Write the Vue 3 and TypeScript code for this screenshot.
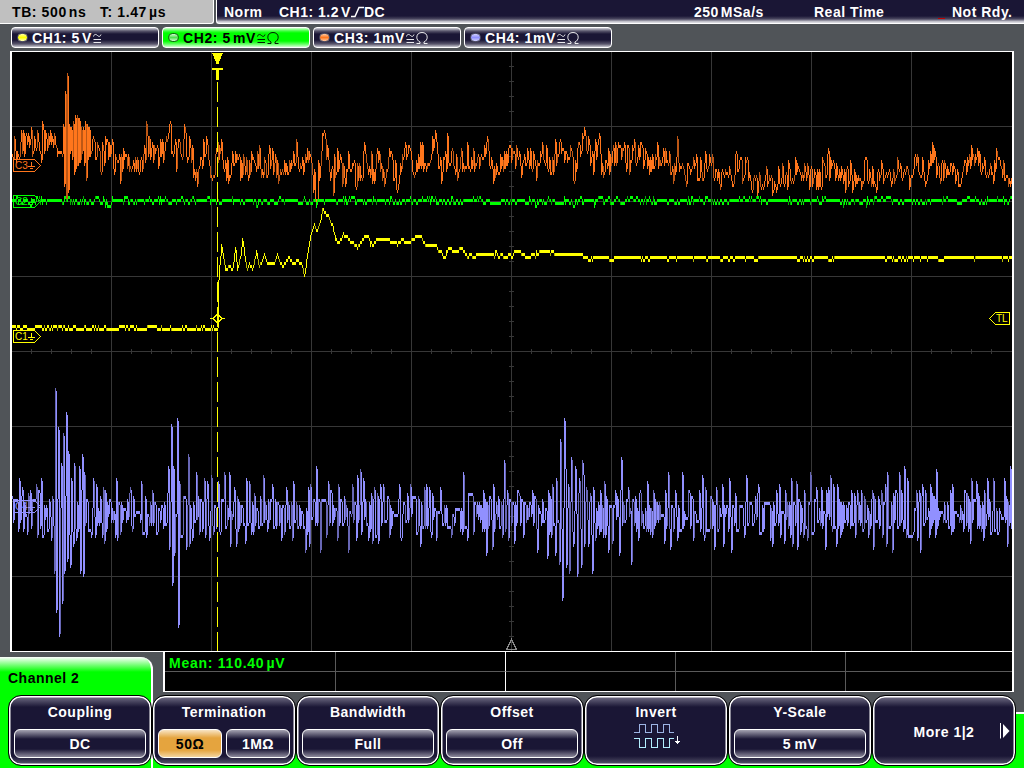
<template>
  <div class="scope">
    <header class="status">
      <div class="timebase">
        <span class="tb">TB: 500<i class="thin"></i>ns</span>
        <span>T: 1.47<i class="thin"></i>µs</span>
      </div>
      <div class="trigger">
        <span class="mode">Norm</span>
        <span class="source">CH1: 1.2<i class="thin"></i>V</span>
        <svg class="edge" width="13" height="12" viewBox="0 0 13 12">
          <path d="M0 10.5H4L8 1.5H13" />
        </svg>
        <span class="dc">DC</span>
        <span class="rate">250<i class="thin"></i>MSa/s</span>
        <span class="realtime">Real Time</span>
        <i class="led"></i>
        <span class="ready">Not Rdy.</span>
      </div>
    </header>

    <nav class="channels">
      <div v-for="ch in channels" :key="ch.name" class="chip" :class="{ active: ch.active }">
        <i class="lamp" :class="ch.lamp"></i>
        <span class="chip-text">{{ ch.name }}: {{ ch.value }}<i class="thin" v-if="ch.gap"></i>{{ ch.unit }}</span>
        <svg class="coupling" width="9" height="10" viewBox="0 0 9 10">
          <path d="M0.5 3.5C1 1 3 1 4.5 2.5S7.5 3.5 8 1.5M0.5 6.5H8M0.5 9.5H8" />
        </svg>
        <svg v-if="ch.ohm" class="coupling" width="12" height="12" viewBox="0 0 12 12">
          <path d="M0.5 11.5H4V10C2 9 0.8 7.5 0.8 5.2C0.8 2.3 3 0.5 6 0.5S11.2 2.3 11.2 5.2C11.2 7.5 10 9 8 10V11.5H11.5" />
        </svg>
      </div>
    </nav>

    <div class="plot">
      <svg width="1000" height="599" viewBox="12 52 1000 599" shape-rendering="crispEdges">
        <g class="grid">
          <path :d="gridPath" />
        </g>
        <g class="traces">
          <path class="c4" :d="ch4.bright" />
          <path class="c4 dim" :d="ch4.dim" />
          <path class="c3" :d="ch3.bright" />
          <path class="c3 dim" :d="ch3.dim" />
          <path class="c2" :d="ch2.bright" />
          <path class="c2 dim" :d="ch2.dim" />
          <path class="c1" :d="ch1.bright" />
          <path class="c1 dim" :d="ch1.dim" />
        </g>
        <path class="trigger-line" d="M217.5 82V651" />
        <path class="trigger-top" d="M212 53H223L219 62V64H216V62ZM212 68H223V70H219V80H216V70H212Z" />
        <path class="level" d="M210 318.5H213L217.5 314L222 318.5L217.5 323L213 318.5M222 318.5H225" />
        <g v-for="m in markers" :key="m.name" :class="['marker', m.cls]" :transform="`translate(13 ${m.y})`">
          <path d="M0.5 0.5H21.5L27.5 6.5L21.5 12.5H0.5Z" />
          <text x="2" y="10">{{ m.name }}</text>
          <path d="M18.5 3V7M15 7.5H22M17 9.5H20" />
        </g>
        <g class="marker c1" transform="translate(989 312)">
          <path d="M20.5 0.5H6.5L0.5 6.5L6.5 12.5H20.5Z" />
          <text x="7" y="10">TL</text>
        </g>
        <path class="origin" d="M506.5 649.5L511.5 639.5L516.5 649.5Z" />
      </svg>
    </div>

    <div class="measure-row">
      <div class="measure">
        <div class="mean">Mean: 110.40<i class="thin"></i>µV</div>
        <div v-for="n in 9" :key="n" class="slot"></div>
      </div>
    </div>

    <footer class="softkeys">
      <div class="tab">Channel 2</div>
      <div class="keys">
        <div v-for="key in keys" :key="key.label" class="key">
          <template v-if="key.more">
            <span class="more">{{ key.label }}</span>
            <svg class="next" width="10" height="16" viewBox="0 0 10 16">
              <path d="M0.5 0V15.5" stroke="#fff" />
              <path d="M3 1L9.5 8L3 15Z" fill="#fff" />
            </svg>
          </template>
          <template v-else>
            <span class="key-label">{{ key.label }}</span>
            <svg v-if="key.wave" class="wave" width="50" height="28" viewBox="0 0 50 28" shape-rendering="crispEdges">
              <path d="M0 9.5H5.5V1.5H11.5V9.5H17.5V1.5H23.5V9.5H29.5V1.5H35.5V9.5H40" stroke="#9db4e4" />
              <path d="M0 15.5H5.5V24.5H11.5V15.5H17.5V24.5H23.5V15.5H29.5V24.5H35.5V15.5H40" stroke="#b4efff" />
              <path d="M43.5 13V21M41 18.5H46M42 19.5H45" stroke="#fff" />
            </svg>
            <div v-else class="values">
              <span v-for="v in key.values" :key="v" class="value" :class="{ on: v === key.on }">{{ v }}</span>
            </div>
          </template>
        </div>
      </div>
    </footer>
  </div>
</template>

<script setup lang="ts">
type Point = [number, number]
type Band = [number, number, number]

interface Trace {
  bright: string
  dim: string
}

interface Key {
  label: string
  values?: string[]
  on?: string
  wave?: boolean
  more?: boolean
}

const X0 = 12
const X1 = 1011

const channels = [
  { name: 'CH1', value: '5', unit: 'V', gap: true, lamp: 'yellow', ohm: false, active: false },
  { name: 'CH2', value: '5', unit: 'mV', gap: true, lamp: 'green', ohm: true, active: true },
  { name: 'CH3', value: '1', unit: 'mV', gap: false, lamp: 'orange', ohm: true, active: false },
  { name: 'CH4', value: '1', unit: 'mV', gap: false, lamp: 'violet', ohm: true, active: false },
]

const markers = [
  { name: 'C3', cls: 'c3', y: 159 },
  { name: 'C2', cls: 'c2', y: 195 },
  { name: 'C1', cls: 'c1', y: 330 },
  { name: 'C4', cls: 'c4', y: 500 },
]

const keys: Key[] = [
  { label: 'Coupling', values: ['DC'] },
  { label: 'Termination', values: ['50Ω', '1MΩ'], on: '50Ω' },
  { label: 'Bandwidth', values: ['Full'] },
  { label: 'Offset', values: ['Off'] },
  { label: 'Invert', wave: true },
  { label: 'Y-Scale', values: ['5\u2009mV'] },
  { label: 'More 1|2', more: true },
]

// seeded generator, so the noise is the same on every load
function random(seed: number) {
  let s = seed
  return () => {
    s = (s * 1664525 + 1013904223) >>> 0
    return s / 4294967296
  }
}

function lerp(points: number[][], x: number, col: number) {
  if (x <= points[0][0]) return points[0][col]
  for (let i = 1; i < points.length; i++) {
    const a = points[i - 1]
    const b = points[i]
    if (x <= b[0]) return a[col] + ((b[col] - a[col]) * (x - a[0])) / (b[0] - a[0])
  }
  return points[points.length - 1][col]
}

// one vertical bar per pixel column, reaching back to the edge of the previous one
function columns(samples: number[], offset: number, rnd: () => number, dimRate: number): Trace {
  const out: Trace = { bright: '', dim: '' }
  const snap = (v: number) => Math.round((v - offset) / 3) * 3 + offset
  let prev = snap(samples[0])
  samples.forEach((v, i) => {
    const cur = snap(v)
    const top = cur > prev ? prev + 3 : cur
    const bottom = cur < prev ? prev : cur + 3
    const seg = `M${X0 + i + 0.5} ${top}V${bottom}`
    if (cur !== prev && rnd() < dimRate) out.dim += seg
    else out.bright += seg
    prev = cur
  })
  return out
}

function gridLines() {
  let d = ''
  for (let x = 111; x < X1; x += 100) d += `M${x + 0.5} 52V651`
  for (let y = 126; y < 640; y += 75) d += `M12 ${y + 0.5}H1012`
  for (let x = 31; x < X1; x += 20) d += `M${x + 0.5} 349V354`
  for (let y = 66; y < 650; y += 15) d += `M509 ${y + 0.5}H514`
  return d
}

const gridPath = gridLines()

const step: Point[] = [
  [217, 328], [218, 282], [219, 267], [221, 245], [223, 257], [225, 270], [229, 266], [232, 270], [235, 248],
  [237, 269], [240, 257], [242, 239], [245, 260], [247, 270], [249, 262], [252, 270], [256, 251], [259, 267],
  [264, 254], [267, 263], [274, 263], [277, 254], [282, 267], [288, 257], [293, 263], [297, 260], [301, 263],
  [304, 276], [307, 253], [310, 237], [314, 224], [317, 231], [320, 220], [322, 209], [325, 213], [328, 215],
  [332, 225], [335, 239], [338, 243], [343, 234], [347, 237], [350, 242], [358, 245], [364, 237], [368, 237],
  [372, 245], [376, 240], [388, 239], [392, 243], [400, 239], [408, 242], [416, 236], [421, 237], [425, 245],
  [436, 246], [439, 252], [445, 253], [448, 249], [462, 249], [467, 256], [473, 254], [485, 254], [497, 252],
  [500, 254], [505, 257], [514, 252], [520, 252], [527, 257], [533, 254], [538, 251], [553, 251], [557, 254],
  [582, 254], [584, 257], [1012, 257],
]

function buildCh1() {
  const rnd = random(11)
  const s: number[] = []
  let hold = 0
  for (let x = X0; x <= X1; x++) {
    if (x < 217) {
      if (rnd() < 0.65) hold = rnd() < 0.36 ? -3 : 0
      s.push(328 + hold)
    } else {
      if (rnd() < 0.65) hold = x > 335 && rnd() < 0.14 ? 3 : 0
      s.push(lerp(step, x, 1) + hold - 1)
    }
  }
  return columns(s, 256, rnd, 0.25)
}

function buildCh2() {
  const rnd = random(5)
  const s: number[] = []
  let hold = 0
  for (let x = X0; x <= X1; x++) {
    if (rnd() < 0.7) {
      const r = rnd()
      hold = r < 0.12 ? -3 : r < 0.4 ? 3 : r < 0.415 ? 6 : 0
    }
    s.push(199 + hold)
  }
  return columns(s, 199, rnd, 0.3)
}

// x, top and bottom of the noise band
const ch3Band: Band[] = [
  [12, 136, 162], [16, 152, 160], [20, 143, 155], [25, 138, 155], [30, 138, 148], [36, 133, 150], [42, 130, 157],
  [50, 133, 145], [55, 134, 150], [57, 143, 156], [60, 144, 156], [62, 145, 158], [63, 123, 160], [64, 91, 187],
  [65, 91, 187], [66, 73, 201], [67, 73, 201], [68, 103, 193], [69, 123, 168], [71, 128, 140], [73, 122, 177],
  [76, 112, 170], [79, 118, 165], [82, 130, 155], [84, 121, 167], [86, 121, 180], [88, 124, 160], [92, 135, 160],
  [97, 140, 162], [103, 145, 183], [107, 136, 160], [113, 148, 166], [117, 153, 178], [125, 152, 172],
  [130, 158, 170], [138, 158, 177], [143, 155, 172], [146, 136, 155], [150, 145, 158], [155, 150, 168],
  [160, 145, 160], [165, 138, 155], [170, 137, 152], [175, 145, 165], [180, 142, 158], [185, 133, 158],
  [190, 136, 165], [194, 150, 178], [196, 165, 195], [198, 165, 185], [203, 150, 165], [205, 133, 150],
  [208, 150, 165], [212, 165, 187], [215, 152, 175], [218, 141, 155], [221, 142, 155], [225, 165, 180],
  [228, 165, 183], [231, 150, 170], [235, 152, 165], [241, 157, 182], [247, 157, 178], [252, 160, 175],
  [257, 150, 167], [262, 170, 183], [267, 160, 175], [270, 156, 172], [276, 165, 180], [282, 157, 175],
  [288, 166, 173], [295, 146, 168], [300, 157, 168], [303, 168, 172], [307, 157, 163], [311, 154, 165],
  [313, 170, 193], [315, 185, 200], [316, 200, 213], [318, 172, 193], [321, 153, 158], [323, 130, 155],
  [325, 133, 155], [328, 149, 163], [331, 172, 192], [335, 157, 180], [340, 155, 167], [343, 163, 187],
  [348, 158, 170], [353, 163, 178], [358, 167, 187], [362, 155, 175], [365, 142, 157], [368, 163, 173],
  [372, 168, 187], [378, 145, 163], [382, 168, 183], [387, 160, 173], [390, 153, 170], [395, 162, 190],
  [397, 175, 196], [400, 163, 177], [404, 142, 152], [408, 147, 160], [413, 163, 177], [419, 154, 174],
  [424, 162, 174], [430, 146, 163], [434, 139, 152], [437, 150, 165], [441, 162, 183], [447, 143, 162],
  [452, 148, 170], [457, 163, 180], [463, 150, 168], [470, 153, 175], [477, 155, 170], [482, 153, 162],
  [486, 142, 157], [492, 165, 183], [496, 162, 176], [501, 163, 171], [505, 152, 170], [512, 149, 163],
  [517, 155, 162], [521, 165, 180], [527, 152, 163], [533, 160, 176], [539, 162, 178], [542, 147, 160],
  [548, 153, 174], [553, 152, 174], [557, 143, 157], [560, 139, 153], [564, 153, 163], [569, 150, 160],
  [572, 156, 170], [574, 165, 187], [578, 140, 162], [583, 133, 150], [587, 136, 153], [591, 155, 177],
  [595, 143, 156], [599, 148, 167], [603, 167, 177], [608, 153, 168], [613, 148, 172], [620, 145, 160],
  [625, 147, 163], [628, 142, 176], [635, 143, 160], [641, 145, 167], [647, 152, 168], [650, 154, 177],
  [657, 153, 168], [661, 157, 170], [666, 150, 165], [673, 162, 180], [677, 151, 168], [682, 158, 167],
  [686, 168, 190], [692, 157, 170], [699, 164, 183], [705, 165, 182], [708, 155, 175], [712, 167, 177],
  [720, 172, 186], [727, 171, 178], [732, 172, 186], [736, 157, 170], [742, 163, 183], [747, 157, 175],
  [750, 178, 195], [756, 180, 195], [763, 170, 188], [768, 169, 184], [771, 183, 198], [777, 177, 188],
  [781, 166, 177], [786, 173, 192], [792, 178, 183], [797, 163, 177], [801, 173, 182], [806, 163, 183],
  [809, 177, 193], [813, 168, 188], [820, 170, 188], [827, 158, 180], [833, 165, 182], [842, 172, 183],
  [850, 170, 188], [854, 167, 183], [857, 183, 200], [862, 173, 187], [864, 158, 180], [868, 173, 183],
  [874, 179, 193], [879, 166, 177], [887, 174, 187], [895, 168, 180], [903, 167, 175], [907, 165, 175],
  [908, 180, 196], [912, 162, 174], [917, 154, 163], [922, 168, 185], [926, 172, 187], [931, 148, 162],
  [934, 152, 168], [937, 163, 180], [942, 163, 183], [947, 167, 177], [952, 160, 177], [960, 169, 187],
  [963, 160, 170], [970, 155, 170], [977, 152, 170], [983, 165, 177], [989, 167, 174], [992, 172, 190],
  [995, 157, 167], [999, 157, 173], [1003, 172, 180], [1012, 178, 191],
]

function buildCh3() {
  const rnd = random(29)
  const s: number[] = []
  let up = false
  for (let x = X0; x <= X1; x++) {
    const burst = x > 62 && x < 90
    // mostly small excursions past the band, now and then a tall one
    const spread = burst ? 0 : rnd() ** 2 * 17
    const top = lerp(ch3Band, x, 1) - spread
    const bottom = lerp(ch3Band, x, 2) - 3 + spread * 0.6
    if (burst || rnd() < 0.55) up = !up
    const reach = burst ? 0 : rnd() * 0.35
    const span = bottom - top
    s.push(up ? top + span * reach : bottom - span * reach)
  }
  return columns(s, 199, rnd, 0.2)
}

const ch4Peaks: Point[] = [
  [12, 496], [18, 532], [19, 478], [22, 487], [27, 535], [30, 490], [36, 484], [37, 538], [41, 478], [51, 541],
  [54, 574], [55, 388], [56, 613], [58, 427], [59, 637], [61, 463], [62, 604], [63, 433], [64, 574], [66, 412],
  [67, 562], [68, 451], [70, 568], [71, 478], [73, 547], [74, 463], [76, 540], [79, 466], [80, 574], [82, 454],
  [83, 577], [84, 472], [91, 538], [93, 478], [95, 538], [96, 484], [102, 538], [103, 487], [104, 544],
  [105, 490], [116, 478], [117, 541], [130, 487], [132, 532], [141, 481], [152, 490], [157, 535], [168, 466],
  [169, 550], [171, 424], [172, 586], [173, 466], [174, 556], [177, 418], [178, 628], [179, 481], [186, 550],
  [188, 454], [189, 547], [192, 541], [196, 472], [199, 535], [204, 478], [207, 481], [209, 541], [211, 475],
  [213, 535], [218, 481], [220, 535], [224, 472], [229, 472], [230, 547], [234, 487], [236, 547], [245, 544],
  [246, 478], [249, 481], [251, 535], [263, 475], [267, 532], [272, 484], [281, 541], [286, 487], [292, 541],
  [293, 481], [305, 553], [308, 487], [309, 547], [310, 484], [316, 466], [320, 553], [326, 538], [328, 481],
  [337, 541], [338, 484], [348, 553], [352, 484], [356, 541], [357, 475], [360, 469], [361, 535], [363, 478],
  [368, 541], [372, 544], [374, 487], [378, 544], [380, 484], [383, 484], [389, 538], [399, 484], [401, 541],
  [410, 484], [420, 547], [424, 487], [426, 484], [427, 528], [429, 487], [431, 538], [436, 541], [440, 487],
  [451, 538], [463, 472], [467, 541], [473, 535], [483, 490], [486, 556], [492, 550], [493, 484], [502, 538],
  [504, 460], [507, 490], [508, 541], [514, 544], [519, 493], [532, 490], [537, 553], [547, 559], [548, 490],
  [551, 538], [552, 484], [555, 556], [556, 478], [559, 565], [560, 439], [562, 601], [564, 418], [565, 466],
  [566, 568], [568, 484], [569, 574], [571, 457], [573, 547], [575, 466], [577, 577], [579, 478], [581, 568],
  [582, 460], [583, 472], [584, 547], [586, 487], [588, 547], [590, 493], [592, 574], [593, 487], [595, 541],
  [600, 490], [603, 538], [604, 481], [608, 553], [612, 544], [615, 490], [619, 556], [621, 457], [628, 487],
  [631, 565], [640, 490], [647, 481], [650, 535], [652, 538], [653, 490], [664, 544], [665, 490], [668, 472],
  [670, 550], [675, 490], [677, 541], [682, 472], [693, 540], [699, 490], [702, 475], [704, 541], [705, 487],
  [714, 550], [716, 487], [722, 484], [723, 547], [729, 478], [731, 553], [735, 493], [744, 538], [746, 475],
  [758, 484], [763, 532], [772, 547], [776, 490], [779, 484], [784, 544], [785, 490], [790, 538], [791, 478],
  [792, 547], [796, 481], [797, 550], [803, 538], [804, 490], [807, 541], [810, 472], [816, 487], [821, 487],
  [825, 550], [830, 475], [832, 532], [833, 484], [836, 547], [837, 484], [851, 490], [855, 538], [857, 490],
  [861, 490], [868, 538], [872, 490], [873, 550], [881, 490], [885, 484], [886, 547], [887, 472], [892, 553],
  [893, 493], [899, 472], [903, 532], [904, 466], [906, 538], [907, 478], [913, 535], [916, 490], [917, 541],
  [919, 490], [920, 553], [922, 484], [930, 484], [931, 529], [936, 469], [937, 529], [950, 490], [952, 484],
  [963, 532], [970, 544], [971, 478], [976, 481], [979, 529], [983, 541], [984, 490], [987, 478], [993, 478],
  [998, 535], [1004, 478], [1007, 547], [1010, 466], [1011, 529],
]

function buildCh4() {
  const rnd = random(47)
  const peaks = new Map<number, number>(ch4Peaks)
  const s: number[] = []
  let value = 512
  for (let x = X0; x <= X1; x++) {
    const peak = peaks.get(x)
    if (peak !== undefined) {
      s.push(peak > 515 ? peak - 3 : peak)
      value = peak > 515 ? 526 : 500
      continue
    }
    const afterPeak = peaks.has(x - 1)
    if (afterPeak || rnd() < 0.6) {
      const amp = (rnd() + rnd()) * 15 - 3
      value = value > 513 ? 514 - amp : 512 + amp
    }
    s.push(value)
  }
  return columns(s, 199, rnd, 0.25)
}

const ch1 = buildCh1()
const ch2 = buildCh2()
const ch3 = buildCh3()
const ch4 = buildCh4()
</script>

<style>
body {
  margin: 0;
  background: #505458;
}
</style>

<style scoped>
.scope {
  width: 1024px;
  height: 768px;
  overflow: hidden;
  display: flex;
  flex-direction: column;
  background: #505458;
  color: #fff;
  font-family: 'Liberation Sans', Arial, sans-serif;
  font-size: 14px;
  font-weight: 700;
  letter-spacing: 0.5px;
  line-height: 16px;
  white-space: nowrap;
}

.thin {
  display: inline-block;
  width: 2px;
}

.status {
  display: flex;
  gap: 2px;
  height: 24px;
}

.timebase {
  box-sizing: border-box;
  width: 214px;
  padding: 4px 0 0 12px;
  display: flex;
  color: #000;
  background: #c0c0c0;
  border-right: 1px solid #fff;
  border-bottom: 1px solid #fff;
  border-bottom-right-radius: 3px;
  letter-spacing: 0.6px;
}

.tb {
  width: 88px;
}

.trigger {
  box-sizing: border-box;
  flex: 1;
  display: flex;
  padding-top: 4px;
  padding-left: 7px;
  background: linear-gradient(#1a1635 0, #1a1635 16px, #4b4860 19px, #d8d8de 22px);
  border-left: 1px solid #fff;
  border-bottom: 1px solid #fff;
  border-bottom-left-radius: 3px;
}

.trigger > * {
  flex: none;
}

.mode {
  width: 55px;
}

.source {
  width: 72px;
}

.edge {
  margin-top: 2px;
}

.edge path {
  fill: none;
  stroke: #fff;
  stroke-width: 1.5;
}

.dc {
  width: 330px;
}

.rate {
  width: 120px;
}

.realtime {
  width: 124px;
}

.led {
  width: 7px;
  height: 1px;
  margin-top: 14px;
  background: #c00000;
}

.ready {
  margin-left: 7px;
}

.channels {
  display: flex;
  gap: 3px;
  height: 21px;
  padding: 3px 11px;
}

.chip {
  box-sizing: border-box;
  width: 148px;
  display: flex;
  align-items: center;
  padding-left: 5px;
  border: 1px solid #fff;
  border-radius: 4px;
  background: linear-gradient(#d0d0d8 0, #59566c 3px, #1a1635 6px, #1a1635 12px, #59566c 16px, #c8c8d0 19px);
}

.chip.active {
  color: #000;
  background: linear-gradient(#d0ffd0 0, #40ff40 3px, #0f0 5px, #0f0 13px, #60ff60 16px, #d0ffd0 19px);
}

.chip-text {
  letter-spacing: 0.6px;
}

.lamp {
  box-sizing: border-box;
  width: 11px;
  height: 9px;
  margin-right: 4px;
  border: 1px solid #55556a;
  border-radius: 5px;
}

.lamp.yellow {
  background: linear-gradient(#ffffa0, #ff0 50%, #ffffc0);
}

.lamp.green {
  border-color: #106010;
  background: linear-gradient(#d0ffd0, #50e050 50%, #d0ffd0);
}

.lamp.orange {
  background: linear-gradient(#ffc8a0, #ff7820 50%, #ffc8a0);
}

.lamp.violet {
  background: linear-gradient(#d0d0ff, #9090ff 50%, #d0d0ff);
}

.coupling {
  margin-left: 1px;
  fill: none;
  stroke: currentColor;
  stroke-width: 0.9;
}

.plot {
  width: 1000px;
  height: 599px;
  margin-left: 10px;
  background: #000;
  border: 2px solid #fff;
  border-top-width: 1px;
  border-bottom-width: 1px;
}

.plot svg {
  display: block;
}

.grid {
  fill: none;
  stroke: #373737;
}

.traces {
  fill: none;
}

.c1 {
  stroke: #ff0;
  color: #ff0;
}

.c2 {
  stroke: #0f0;
  color: #0f0;
}

.c3 {
  stroke: #ff761c;
  color: #ff761c;
}

.c4 {
  stroke: #9190ff;
  color: #9190ff;
}

.c1.dim {
  stroke: #b8b800;
}

.c2.dim {
  stroke: #00b400;
}

.c3.dim {
  stroke: #bd5715;
}

.c4.dim {
  stroke: #6867b5;
}

.marker {
  fill: none;
}

.marker text {
  fill: currentColor;
  stroke: none;
  font-size: 10px;
  font-weight: 400;
  letter-spacing: 0;
}

.trigger-line {
  stroke: #ff0;
  stroke-dasharray: 20 5;
}

.trigger-top {
  fill: #ff0;
}

.level {
  fill: none;
  stroke: #ff0;
}

.origin {
  fill: none;
  stroke: #8a8a8a;
}

.measure-row {
  height: 40px;
  padding-left: 163px;
}

.measure {
  box-sizing: border-box;
  width: 851px;
  height: 40px;
  display: grid;
  grid-template-columns: 171px 170px 170px 170px 1fr;
  grid-template-rows: 20px 19px;
  background: #000;
  border: solid #fff;
  border-width: 0 2px 1px 2px;
}

.mean,
.slot {
  box-sizing: border-box;
  border-right: 1px solid #5a5a5a;
}

.measure > :nth-child(-n + 5) {
  border-bottom: 1px solid #5a5a5a;
}

.measure > :nth-child(5n + 2) {
  border-right-color: #fff;
}

.measure > :nth-child(5n) {
  border-right: 0;
}

.mean {
  padding: 3px 0 0 4px;
  color: #0f0;
  letter-spacing: 0.75px;
}

.softkeys {
  flex: 1;
  position: relative;
}

/* the green sheet rises behind the first key and runs under the whole row */
.softkeys::before {
  content: '';
  position: absolute;
  inset: 20px 0 0 0;
  border-top: 2px solid #fff;
  background: #0f0;
}

.tab {
  position: absolute;
  left: 0;
  top: -35px;
  box-sizing: border-box;
  width: 153px;
  height: 111px;
  padding: 13px 0 0 8px;
  color: #000;
  background: linear-gradient(#fff 0, #0f0 15px);
  border-right: 2px solid #fff;
  border-top-right-radius: 12px;
}

.keys {
  position: relative;
  display: flex;
  padding: 3px 8px 0;
}

.key {
  box-sizing: border-box;
  width: 144px;
  height: 71px;
  display: flex;
  flex-direction: column;
  align-items: center;
  position: relative;
  padding-top: 8px;
  border: 1px solid #000;
  border-radius: 13px;
  background: linear-gradient(#77748a 0, #1a1635 11px, #1a1635 60px, #656278 70px);
  box-shadow: inset 0 0 0 1.5px #fff;
}

.wave {
  margin: 3px 0 0 5px;
  fill: none;
}

.values {
  box-sizing: border-box;
  width: 100%;
  display: flex;
  gap: 4px;
  margin-top: 9px;
  padding: 0 5px;
}

.value {
  box-sizing: border-box;
  flex: 1;
  height: 29px;
  padding-top: 6px;
  text-align: center;
  border: 1px solid #fff;
  border-radius: 6px;
  background: linear-gradient(#a5a3b2 0, #1a1635 9px, #1a1635 19px, #8d8a9c 27px);
}

.value.on {
  color: #000;
  background: linear-gradient(#f8e4c4 0, #e5a43e 8px, #e5a43e 20px, #f3d5a0 27px);
}

.more {
  padding-top: 20px;
}

.next {
  position: absolute;
  right: 5px;
  top: 27px;
}
</style>
